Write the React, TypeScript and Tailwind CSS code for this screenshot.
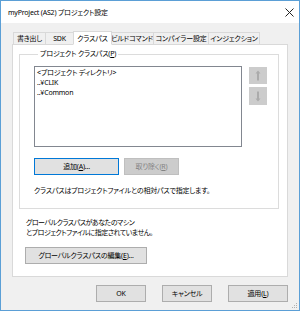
import React from "react";

const font = "font-['Noto_Sans','Noto_Sans_CJK_JP',sans-serif] [font-feature-settings:'palt']";

function Tab({ label, w, selected }: { label: string; w: string; selected?: boolean }) {
  if (selected) {
    return (
      <div className={`${w} h-[14px] -mb-px z-10 bg-white border border-[#d9d9d9] border-b-white -mx-[1px] flex items-center justify-center whitespace-nowrap text-[7px] tracking-[-0.2px] leading-none text-black`}>
        {label}
      </div>
    );
  }
  return (
    <div className={`${w} h-[12px] bg-[#f0f0f0] border border-[#d9d9d9] border-b-0 -ml-px first:ml-0 flex items-center justify-center whitespace-nowrap text-[7px] tracking-[-0.2px] leading-none text-black`}>
      {label}
    </div>
  );
}

function Btn({ children, className = "" }: { children: React.ReactNode; className?: string }) {
  return (
    <div className={`h-[17px] bg-[#e1e1e1] border border-[#adadad] flex items-center justify-center whitespace-nowrap text-[7px] tracking-[-0.2px] leading-none text-black ${className}`}>
      {children}
    </div>
  );
}

export default function App() {
  return (
    <div className={`w-[300px] h-[311px] bg-[#f0f0f0] border border-[#5b9fd6] flex flex-col ${font}`}>
      {/* Title bar */}
      <div className="h-[22px] bg-white flex items-center justify-between pl-[7px] pr-[5px]">
        <span className="text-[7px] tracking-[-0.2px] leading-none text-black">myProject (AS2) プロジェクト設定</span>
        <svg width="9" height="9" viewBox="0 0 9 9">
          <path d="M0.5 0.5 L8.5 8.5 M8.5 0.5 L0.5 8.5" stroke="#222" strokeWidth="1" />
        </svg>
      </div>

      <div className="pl-[11px] pt-[7px]">
        {/* Tabs */}
        <div className="flex items-end h-[14px] pl-px">
          <Tab label="書き出し" w="w-[33px]" />
          <Tab label="SDK" w="w-[29px]" />
          <Tab label="クラスパス" w="w-[39px]" selected />
          <Tab label="ビルドコマンド" w="w-[44px]" />
          <Tab label="コンパイラー設定" w="w-[56px]" />
          <Tab label="インジェクション" w="w-[52px]" />
        </div>

        {/* Panel */}
        <div className="w-[276px] h-[233px] bg-white border border-[#d9d9d9] pl-[6px] pt-[4px]">
          <fieldset className="w-[260px] h-[160px] border border-[#dcdcdc] pl-[14px] pr-0 m-0 pt-[7px]">
            <legend className="ml-[4px] px-[2px] text-[7px] tracking-[-0.2px] leading-[10px] text-black">
              プロジェクト クラスパス(<span className="underline">P</span>)
            </legend>
            <div className="flex gap-[7px]">
              <div className="w-[208px] h-[81px] shrink-0 border border-[#828790] bg-white px-[2px] pt-[1px] text-[7px] tracking-[-0.2px] leading-[10px] text-black">
                <div>&lt;プロジェクト ディレクトリ&gt;</div>
                <div>..¥CLIK</div>
                <div>..¥Common</div>
              </div>
              <div className="flex flex-col gap-[3px] pt-px">
                <div className="w-[18px] h-[17px] bg-[#cccccc] flex items-center justify-center">
                  <svg width="6" height="11" viewBox="0 0 6 11">
                    <path d="M3 0.5 L5.5 3.5 H4 V10.5 H2 V3.5 H0.5 Z" fill="#ababab" />
                  </svg>
                </div>
                <div className="w-[18px] h-[18px] bg-[#cccccc] flex items-center justify-center">
                  <svg width="6" height="11" viewBox="0 0 6 11">
                    <path d="M3 10.5 L5.5 7.5 H4 V0.5 H2 V7.5 H0.5 Z" fill="#ababab" />
                  </svg>
                </div>
              </div>
            </div>
            <div className="flex gap-[5px] mt-[11px]">
              <Btn className="w-[85px] !border-[#0078d7]">
                追加(<span className="underline">A</span>)...
              </Btn>
              <div className="w-[55px] h-[17px] bg-[#cccccc] border border-[#bfbfbf] flex items-center justify-center whitespace-nowrap text-[7px] tracking-[-0.2px] leading-none text-[#838383]">
                取り除く(<span className="underline">R</span>)
              </div>
            </div>
            <div className="mt-[12px] text-[7px] tracking-[-0.2px] leading-none text-black whitespace-nowrap">
              クラスパスはプロジェクトファイルとの相対パスで指定します。
            </div>
          </fieldset>

          <div className="pl-[7px] pt-[9px] text-[7px] tracking-[-0.5px] leading-[10px] text-black">
            <div>グローバルクラスパスがあなたのマシン</div>
            <div>とプロジェクトファイルに指定されていません。</div>
          </div>
          <div className="pl-[6px] pt-[9px]">
            <Btn className="w-[122px] h-[16px]">
              グローバルクラスパスの編集(<span className="underline">E</span>)...
            </Btn>
          </div>
        </div>
      </div>

      {/* Footer */}
      <div className="flex justify-end gap-[16px] pr-[11px] pt-[8px]">
        <Btn className="w-[50px]">OK</Btn>
        <Btn className="w-[50px]">キャンセル</Btn>
        <Btn className="w-[60px]">
          適用(<span className="underline">L</span>)
        </Btn>
      </div>
      <div className="flex-1 flex items-end justify-end pr-[1px] pb-[1px]">
        <svg width="6" height="6" viewBox="0 0 6 6">
          <rect x="4" y="0" width="1" height="1" fill="#b0b0b0" />
          <rect x="2" y="2" width="1" height="1" fill="#b0b0b0" />
          <rect x="4" y="2" width="1" height="1" fill="#b0b0b0" />
          <rect x="0" y="4" width="1" height="1" fill="#b0b0b0" />
          <rect x="2" y="4" width="1" height="1" fill="#b0b0b0" />
          <rect x="4" y="4" width="1" height="1" fill="#b0b0b0" />
        </svg>
      </div>
    </div>
  );
}
